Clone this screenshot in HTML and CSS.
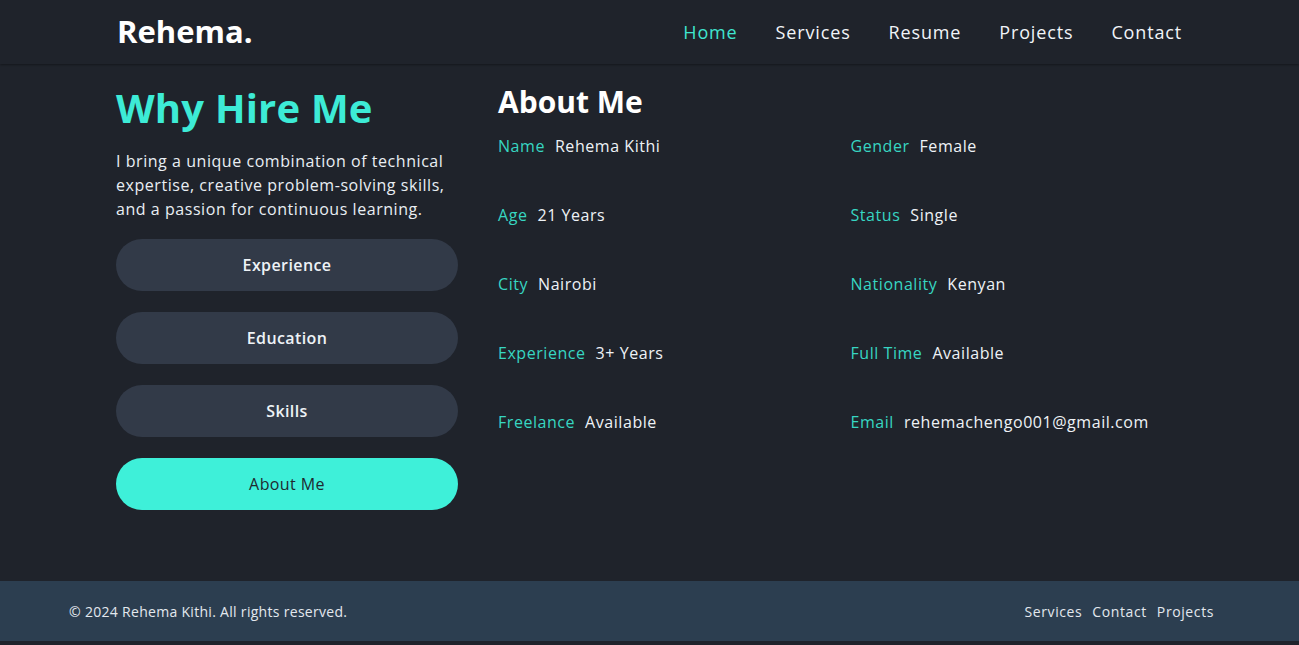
FILE: index.html
```html
<!DOCTYPE html>
<html lang="en">
<head>
<meta charset="utf-8">
<title>Rehema</title>
<link rel="stylesheet" href="styles.css">
</head>
<body>
<header class="site-header">
  <div class="header-inner">
    <a class="logo" href="#">Rehema.</a>
    <nav class="nav">
      <a class="nav-link active" href="#">Home</a>
      <a class="nav-link" href="#">Services</a>
      <a class="nav-link" href="#">Resume</a>
      <a class="nav-link" href="#">Projects</a>
      <a class="nav-link" href="#">Contact</a>
    </nav>
  </div>
</header>
<main class="main">
  <div class="resume">
    <section class="side">
      <h1 class="side-title">Why Hire Me</h1>
      <p class="side-text">I bring a unique combination of technical expertise, creative problem-solving skills, and a passion for continuous learning.</p>
      <div class="tabs">
        <button class="tab">Experience</button>
        <button class="tab">Education</button>
        <button class="tab">Skills</button>
        <button class="tab tab-active">About Me</button>
      </div>
    </section>
    <section class="content">
      <h2 class="content-title">About Me</h2>
      <ul class="info">
        <li class="info-item"><span class="info-label">Name</span><span class="info-value">Rehema Kithi</span></li>
        <li class="info-item"><span class="info-label">Gender</span><span class="info-value">Female</span></li>
        <li class="info-item"><span class="info-label">Age</span><span class="info-value">21 Years</span></li>
        <li class="info-item"><span class="info-label">Status</span><span class="info-value">Single</span></li>
        <li class="info-item"><span class="info-label">City</span><span class="info-value">Nairobi</span></li>
        <li class="info-item"><span class="info-label">Nationality</span><span class="info-value">Kenyan</span></li>
        <li class="info-item"><span class="info-label">Experience</span><span class="info-value">3+ Years</span></li>
        <li class="info-item"><span class="info-label">Full Time</span><span class="info-value">Available</span></li>
        <li class="info-item"><span class="info-label">Freelance</span><span class="info-value">Available</span></li>
        <li class="info-item"><span class="info-label">Email</span><span class="info-value">rehemachengo001@gmail.com</span></li>
      </ul>
    </section>
  </div>
</main>
<footer class="site-footer">
  <p class="copyright">© 2024 Rehema Kithi. All rights reserved.</p>
  <nav class="footer-nav">
    <a class="footer-link" href="#">Services</a>
    <a class="footer-link" href="#">Contact</a>
    <a class="footer-link" href="#">Projects</a>
  </nav>
</footer>
</body>
</html>
```
FILE: styles.css
```css
* { box-sizing: border-box; }
html, body { margin: 0; padding: 0; }
body {
  background: #1f232b;
  color: #eef2f6;
  font-family: "Open Sans", "Liberation Sans", sans-serif;
  height: 645px;
  overflow: hidden;
}
a { text-decoration: none; color: inherit; }

.site-header {
  height: 64px;
  background: #1f232b;
  box-shadow: 0 1px 2px rgba(0,0,0,0.35);
  position: relative;
  z-index: 1;
}
.header-inner {
  width: 1067px;
  margin: 0 auto;
  height: 64px;
  display: flex;
  align-items: center;
  justify-content: space-between;
}
.logo {
  font-size: 31px;
  font-weight: 700;
  color: #ffffff;
  margin-left: 1px;
  margin-top: -2px;
}
.nav { display: flex; gap: 38px; margin-right: 1px; }
.nav-link {
  font-size: 18px;
  font-weight: 500;
  letter-spacing: 0.85px;
  color: #f1f4f8;
}
.nav-link.active { color: #3fe5cf; }

.main {
  height: 517px;
  padding-top: 16px;
}
.resume {
  width: 1067px;
  margin: 0 auto;
  display: grid;
  grid-template-columns: 342px 1fr;
  gap: 40px;
}
.side-title {
  margin: 0;
  font-size: 40px;
  font-weight: 700;
  color: #3debd6;
  line-height: 56px;
  letter-spacing: 0.2px;
}
.side-text {
  margin: 13px 0 18px;
  font-size: 16px;
  line-height: 24px;
  letter-spacing: 0.55px;
  color: #e9eef3;
}
.tabs { display: flex; flex-direction: column; gap: 21px; }
.tab {
  height: 52px;
  border: none;
  border-radius: 26px;
  background: #323a48;
  color: #eef2f6;
  font-family: inherit;
  font-size: 16px;
  font-weight: 600;
  letter-spacing: 0.4px;
}
.tab-active { background: #3ef0d9; color: #1f2a30; font-weight: 500; }

.content-title {
  margin: 4px 0 14px;
  font-size: 30px;
  font-weight: 700;
  color: #ffffff;
  line-height: 36px;
}
.info {
  list-style: none;
  margin: 0;
  padding: 0;
  display: grid;
  grid-template-columns: 1fr 1fr;
  column-gap: 20px;
  row-gap: 45px;
}
.info-item {
  display: flex;
  gap: 10px;
  font-size: 16px;
  line-height: 24px;
  letter-spacing: 0.55px;
}
.info-label { color: #37d6c2; }
.info-value { color: #eef2f6; }

.site-footer {
  height: 60px;
  background: #2c3e50;
  display: flex;
  align-items: center;
  justify-content: space-between;
  padding: 0 85px 0 69px;
}
.copyright { margin: 0; font-size: 14px; letter-spacing: 0.3px; color: #e3e8ee; }
.footer-nav { display: flex; gap: 10px; }
.footer-link { font-size: 14px; letter-spacing: 0.6px; color: #e3e8ee; }
```
